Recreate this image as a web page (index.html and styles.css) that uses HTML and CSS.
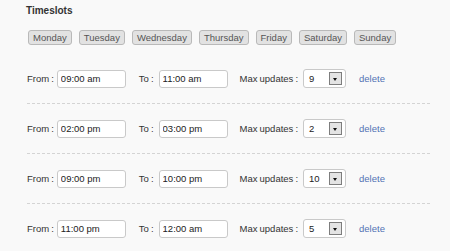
FILE: index.html
```html
<!DOCTYPE html>
<html lang="en">
<head>
    <meta charset="UTF-8">
    <meta name="viewport" content="width=device-width, initial-scale=1.0">
    <title>Timeslots</title>
    <link rel="stylesheet" href="styles.css">
</head>
<body>
    <div class="timeslots">
        <h3>Timeslots</h3>

        <div class="days">
            <button class="day-btn">Monday</button>
            <button class="day-btn">Tuesday</button>
            <button class="day-btn">Wednesday</button>
            <button class="day-btn">Thursday</button>
            <button class="day-btn">Friday</button>
            <button class="day-btn">Saturday</button>
            <button class="day-btn">Sunday</button>
        </div>

        <div class="slot">
            <label class="slot-label">From :</label>
            <input type="text" class="time-input" value="09:00 am">
            <label class="slot-label to">To :</label>
            <input type="text" class="time-input" value="11:00 am">
            <label class="slot-label max">Max updates :</label>
            <div class="select"><span>9</span><span class="arrow"></span></div>
            <a href="#" class="delete-link">delete</a>
        </div>

        <div class="slot">
            <label class="slot-label">From :</label>
            <input type="text" class="time-input" value="02:00 pm">
            <label class="slot-label to">To :</label>
            <input type="text" class="time-input" value="03:00 pm">
            <label class="slot-label max">Max updates :</label>
            <div class="select"><span>2</span><span class="arrow"></span></div>
            <a href="#" class="delete-link">delete</a>
        </div>

        <div class="slot">
            <label class="slot-label">From :</label>
            <input type="text" class="time-input" value="09:00 pm">
            <label class="slot-label to">To :</label>
            <input type="text" class="time-input" value="10:00 pm">
            <label class="slot-label max">Max updates :</label>
            <div class="select"><span>10</span><span class="arrow"></span></div>
            <a href="#" class="delete-link">delete</a>
        </div>

        <div class="slot">
            <label class="slot-label">From :</label>
            <input type="text" class="time-input" value="11:00 pm">
            <label class="slot-label to">To :</label>
            <input type="text" class="time-input" value="12:00 am">
            <label class="slot-label max">Max updates :</label>
            <div class="select"><span>5</span><span class="arrow"></span></div>
            <a href="#" class="delete-link">delete</a>
        </div>
    </div>
</body>
</html>
```

FILE: styles.css
```css
body {
    margin: 0;
    background: #f9f9f9;
    font-family: "Liberation Sans", Arial, sans-serif;
    font-size: 9.5px;
    color: #333;
}

.timeslots {
    width: 403px;
    padding: 5px 0 0 27px;
}

.timeslots h3 {
    margin: 0 0 13px -1px;
    font-size: 10px;
    line-height: 12px;
    font-weight: bold;
    color: #333;
}

.days {
    display: flex;
    gap: 7px;
    margin-bottom: 9px;
    padding-left: 1px;
}

.day-btn {
    height: 15px;
    padding: 0 4px;
    margin: 0;
    background: #e2e2e2;
    border: 1px solid #b9b9b9;
    border-radius: 3px;
    font-family: inherit;
    font-size: 9.5px;
    line-height: 13px;
    color: #555;
}

.slot {
    display: flex;
    align-items: center;
    padding: 15px 0;
    border-bottom: 1px dashed #d4d4d4;
}

.slot-label {
    margin-right: 3px;
    color: #333;
    word-spacing: -0.6px;
}

.slot-label.to {
    margin-left: 13px;
    margin-right: 5px;
}

.slot-label.max {
    margin-left: 12px;
    margin-right: 5px;
}

.time-input {
    width: 69px;
    height: 18px;
    padding: 0 3px;
    margin: 0;
    box-sizing: border-box;
    background: #fff;
    border: 1px solid #c9c9c9;
    border-radius: 3px;
    font-family: inherit;
    font-size: 9.5px;
    color: #222;
}

.select {
    display: flex;
    align-items: center;
    justify-content: space-between;
    width: 43px;
    height: 19px;
    padding: 0 3px 0 5px;
    box-sizing: border-box;
    background: #fff;
    border: 1px solid #c9c9c9;
    border-radius: 3px;
    color: #222;
}

.select .arrow {
    position: relative;
    width: 13px;
    height: 13px;
    box-sizing: border-box;
    background: #e4e4e4;
    border: 1px solid #7d7d7d;
}

.select .arrow::after {
    content: "";
    position: absolute;
    left: 3px;
    top: 5px;
    border-left: 2.5px solid transparent;
    border-right: 2.5px solid transparent;
    border-top: 3px solid #111;
}

.delete-link {
    margin-left: 13px;
    color: #5272b4;
    text-decoration: none;
}

.delete-link:hover {
    text-decoration: underline;
}
```
